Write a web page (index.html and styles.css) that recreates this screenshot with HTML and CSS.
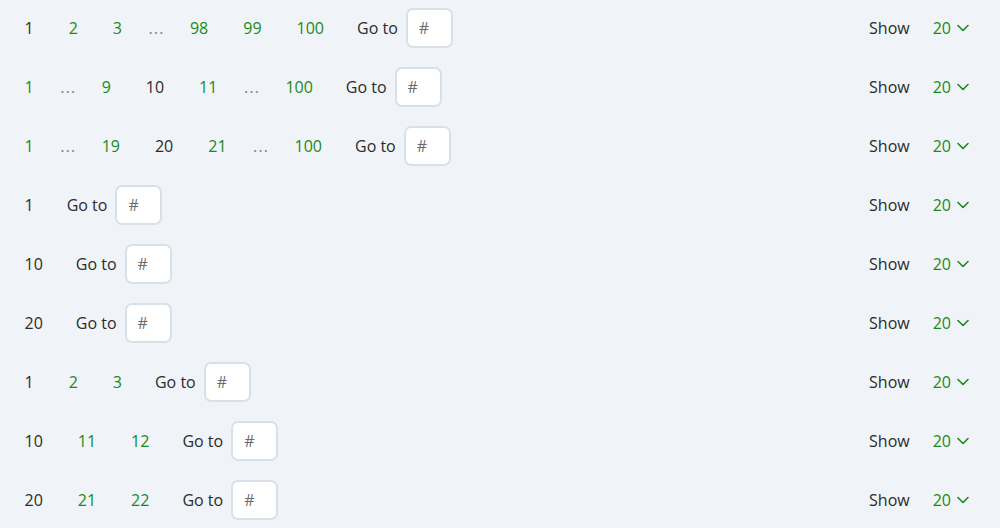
FILE: index.html
```html
<!DOCTYPE html>
<html lang="en">
<head>
<meta charset="utf-8">
<title>Pagination</title>
<link rel="stylesheet" href="styles.css">
</head>
<body>
<div class="list">
  <div class="pager">
    <div class="pages">
      <span class="page current">1</span>
      <a class="page">2</a>
      <a class="page">3</a>
      <span class="dots">…</span>
      <a class="page">98</a>
      <a class="page">99</a>
      <a class="page">100</a>
      <div class="goto"><span>Go to</span><input class="goto-input" placeholder="#"></div>
    </div>
    <div class="show"><span>Show</span><span class="size">20<svg class="chev" viewBox="0 0 12 8"><path d="M1 1.5 6 6.5 11 1.5" /></svg></span></div>
  </div>

  <div class="pager">
    <div class="pages">
      <a class="page">1</a>
      <span class="dots">…</span>
      <a class="page">9</a>
      <span class="page current">10</span>
      <a class="page">11</a>
      <span class="dots">…</span>
      <a class="page">100</a>
      <div class="goto"><span>Go to</span><input class="goto-input" placeholder="#"></div>
    </div>
    <div class="show"><span>Show</span><span class="size">20<svg class="chev" viewBox="0 0 12 8"><path d="M1 1.5 6 6.5 11 1.5" /></svg></span></div>
  </div>

  <div class="pager">
    <div class="pages">
      <a class="page">1</a>
      <span class="dots">…</span>
      <a class="page">19</a>
      <span class="page current">20</span>
      <a class="page">21</a>
      <span class="dots">…</span>
      <a class="page">100</a>
      <div class="goto"><span>Go to</span><input class="goto-input" placeholder="#"></div>
    </div>
    <div class="show"><span>Show</span><span class="size">20<svg class="chev" viewBox="0 0 12 8"><path d="M1 1.5 6 6.5 11 1.5" /></svg></span></div>
  </div>

  <div class="pager">
    <div class="pages">
      <span class="page current">1</span>
      <div class="goto"><span>Go to</span><input class="goto-input" placeholder="#"></div>
    </div>
    <div class="show"><span>Show</span><span class="size">20<svg class="chev" viewBox="0 0 12 8"><path d="M1 1.5 6 6.5 11 1.5" /></svg></span></div>
  </div>

  <div class="pager">
    <div class="pages">
      <span class="page current">10</span>
      <div class="goto"><span>Go to</span><input class="goto-input" placeholder="#"></div>
    </div>
    <div class="show"><span>Show</span><span class="size">20<svg class="chev" viewBox="0 0 12 8"><path d="M1 1.5 6 6.5 11 1.5" /></svg></span></div>
  </div>

  <div class="pager">
    <div class="pages">
      <span class="page current">20</span>
      <div class="goto"><span>Go to</span><input class="goto-input" placeholder="#"></div>
    </div>
    <div class="show"><span>Show</span><span class="size">20<svg class="chev" viewBox="0 0 12 8"><path d="M1 1.5 6 6.5 11 1.5" /></svg></span></div>
  </div>

  <div class="pager">
    <div class="pages">
      <span class="page current">1</span>
      <a class="page">2</a>
      <a class="page">3</a>
      <div class="goto"><span>Go to</span><input class="goto-input" placeholder="#"></div>
    </div>
    <div class="show"><span>Show</span><span class="size">20<svg class="chev" viewBox="0 0 12 8"><path d="M1 1.5 6 6.5 11 1.5" /></svg></span></div>
  </div>

  <div class="pager">
    <div class="pages">
      <span class="page current">10</span>
      <a class="page">11</a>
      <a class="page">12</a>
      <div class="goto"><span>Go to</span><input class="goto-input" placeholder="#"></div>
    </div>
    <div class="show"><span>Show</span><span class="size">20<svg class="chev" viewBox="0 0 12 8"><path d="M1 1.5 6 6.5 11 1.5" /></svg></span></div>
  </div>

  <div class="pager">
    <div class="pages">
      <span class="page current">20</span>
      <a class="page">21</a>
      <a class="page">22</a>
      <div class="goto"><span>Go to</span><input class="goto-input" placeholder="#"></div>
    </div>
    <div class="show"><span>Show</span><span class="size">20<svg class="chev" viewBox="0 0 12 8"><path d="M1 1.5 6 6.5 11 1.5" /></svg></span></div>
  </div>
</div>
</body>
</html>
```

FILE: styles.css
```css
html, body {
  background: #f0f4f8;
}
body {
  margin: 8px;
  font-family: "Open Sans", "Noto Sans", sans-serif;
  font-size: 16px;
  color: #2b2b2b;
}
.list {
  display: flex;
  flex-direction: column;
  gap: 19px;
}
.pager {
  display: flex;
  align-items: center;
  justify-content: space-between;
  height: 40px;
  padding: 0 16px 0 16.5px;
}
.pages {
  display: flex;
  align-items: center;
  gap: 35px;
}
.page {
  color: #1a8a1a;
  cursor: pointer;
}
.page.current {
  color: #2b2b2b;
  cursor: default;
}
.dots {
  margin: 0 -9px;
  font-family: "DejaVu Sans", sans-serif;
  color: #8a8a8a;
}
.goto {
  display: flex;
  align-items: center;
  gap: 8px;
  margin-left: -2px;
}
.goto-input {
  box-sizing: border-box;
  width: 47px;
  height: 40px;
  border: 2px solid #d8e1ea;
  border-radius: 7px;
  background: #fff;
  padding: 0 0 0 11px;
  font-family: inherit;
  font-size: 16px;
  color: #333;
  outline: none;
}
.goto-input::placeholder {
  color: #6b6b6b;
}
.show {
  display: flex;
  align-items: center;
  gap: 23px;
  padding-right: 7px;
}
.size {
  display: flex;
  align-items: center;
  gap: 6px;
  color: #1a8a1a;
}
.chev {
  width: 12px;
  height: 8px;
  fill: none;
  stroke: #1a8a1a;
  stroke-width: 1.6;
  stroke-linecap: round;
  stroke-linejoin: round;
}
```
